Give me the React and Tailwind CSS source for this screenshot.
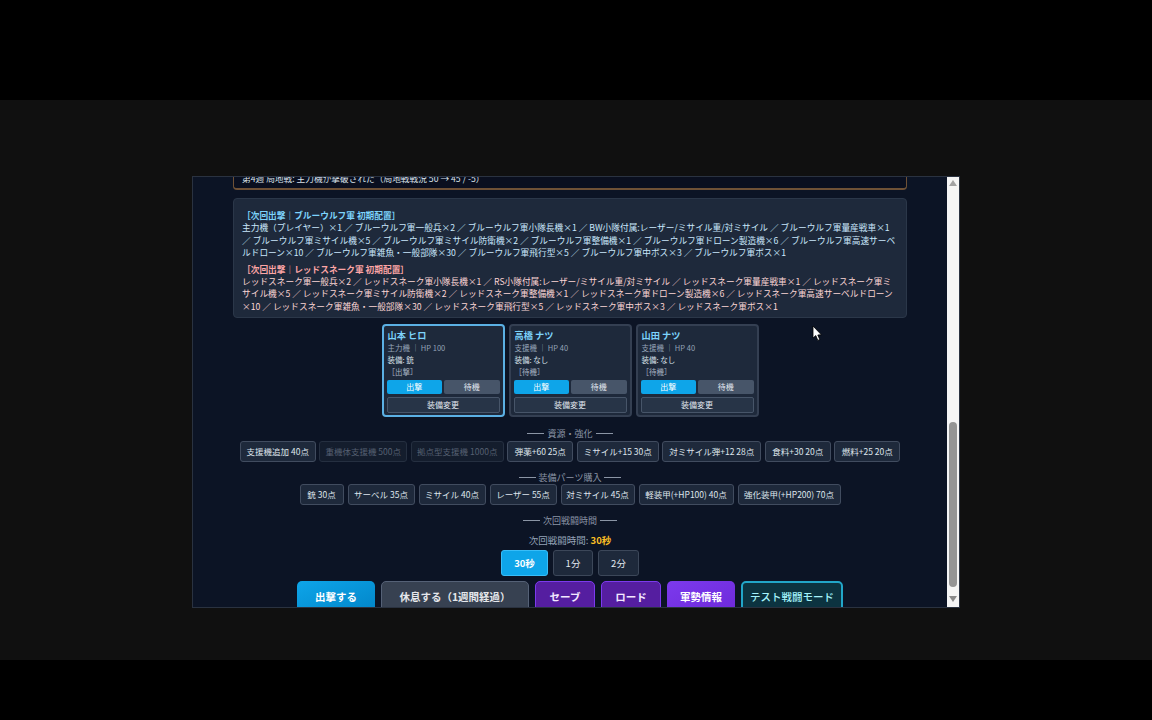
const font = { fontFamily: '"Noto Sans CJK JP", "Liberation Sans", sans-serif' };

const blueList =
  "主力機（プレイヤー）×1 ／ ブルーウルフ軍一般兵×2 ／ ブルーウルフ軍小隊長機×1 ／ BW小隊付属:レーザー/ミサイル重/対ミサイル ／ ブルーウルフ軍量産戦車×1 ／ ブルーウルフ軍ミサイル機×5 ／ ブルーウルフ軍ミサイル防衛機×2 ／ ブルーウルフ軍整備機×1 ／ ブルーウルフ軍ドローン製造機×6 ／ ブルーウルフ軍高速サーベルドローン×10 ／ ブルーウルフ軍雑魚・一般部隊×30 ／ ブルーウルフ軍飛行型×5 ／ ブルーウルフ軍中ボス×3 ／ ブルーウルフ軍ボス×1";
const redList =
  "レッドスネーク軍一般兵×2 ／ レッドスネーク軍小隊長機×1 ／ RS小隊付属:レーザー/ミサイル重/対ミサイル ／ レッドスネーク軍量産戦車×1 ／ レッドスネーク軍ミサイル機×5 ／ レッドスネーク軍ミサイル防衛機×2 ／ レッドスネーク軍整備機×1 ／ レッドスネーク軍ドローン製造機×6 ／ レッドスネーク軍高速サーベルドローン×10 ／ レッドスネーク軍雑魚・一般部隊×30 ／ レッドスネーク軍飛行型×5 ／ レッドスネーク軍中ボス×3 ／ レッドスネーク軍ボス×1";

const pilots = [
  { name: "山本 ヒロ", role: "主力機 ｜ HP 100", gear: "装備: 銃", state: "［出撃］", active: true },
  { name: "高橋 ナツ", role: "支援機 ｜ HP 40", gear: "装備: なし", state: "［待機］" },
  { name: "山田 ナツ", role: "支援機 ｜ HP 40", gear: "装備: なし", state: "［待機］" },
];

const resources = [
  { label: "支援機追加 40点", w: "w-[76px]" },
  { label: "重機体支援機 500点", w: "w-[88px]", off: true },
  { label: "拠点型支援機 1000点", w: "w-[93px]", off: true },
  { label: "弾薬+60 25点", w: "w-[66px]" },
  { label: "ミサイル+15 30点", w: "w-[82px]" },
  { label: "対ミサイル弾+12 28点", w: "w-[99px]" },
  { label: "食料+30 20点", w: "w-[66px]" },
  { label: "燃料+25 20点", w: "w-[66px]" },
];

const parts = [
  { label: "銃 30点", w: "w-[44px]" },
  { label: "サーベル 35点", w: "w-[67px]" },
  { label: "ミサイル 40点", w: "w-[67px]" },
  { label: "レーザー 55点", w: "w-[67px]" },
  { label: "対ミサイル 45点", w: "w-[74px]" },
  { label: "軽装甲(+HP100) 40点", w: "w-[95px]" },
  { label: "強化装甲(+HP200) 70点", w: "w-[103px]" },
];

const ShopButton = ({ label, w, off }) => (
  <button
    className={`h-[21px] shrink-0 rounded-[3px] border whitespace-nowrap text-center text-[8.5px] ${w} ${
      off
        ? "border-[#252f40] bg-[#141d2d] text-[#566072]"
        : "border-[#414c5f] bg-[#1e293b] text-[#dfe5ec]"
    }`}
  >
    {label}
  </button>
);

const SectionTitle = ({ children }) => (
  <div className="flex h-[12px] items-center justify-center gap-[3px] text-[9px] leading-none text-[#8b95a5]">
    <span className="h-px w-[17px] bg-[#8b95a5]"></span>
    <span>{children}</span>
    <span className="h-px w-[17px] bg-[#8b95a5]"></span>
  </div>
);

const PilotCard = ({ name, role, gear, state, active }) => (
  <div
    className={`flex h-[93px] w-[123px] flex-col rounded-[4px] border-2 bg-[#1e293b] px-[3px] pt-[2px] ${
      active ? "border-[#5bb0e4]" : "border-[#343f52]"
    }`}
  >
    <div className="h-[14px] pl-[1px] text-[9.2px] leading-[14px] font-bold text-[#7dd3fc]">{name}</div>
    <div className="h-[12px] pl-[1px] text-[7.5px] leading-[12px] text-[#94a3b8]">{role}</div>
    <div className="h-[12px] pl-[1px] text-[7.5px] leading-[12px] text-[#dbe2ea]">{gear}</div>
    <div className="h-[12px] pl-[1px] text-[7.5px] leading-[12px] text-[#a8b3c2]">{state}</div>
    <div className="mt-[2px] flex gap-[2px]">
      <button className="h-[14px] flex-1 rounded-[2px] bg-[#0ea5e9] text-[8px] leading-none text-white">出撃</button>
      <button className="h-[14px] flex-1 rounded-[2px] bg-[#475569] text-[8px] leading-none text-[#e2e8f0]">待機</button>
    </div>
    <button className="mt-[3px] h-[16px] rounded-[2px] border border-[#475569] bg-[#273447] text-[8px] leading-none text-[#e2e8f0]">
      装備変更
    </button>
  </div>
);

const Cursor = () => (
  <svg className="absolute top-[325px] left-[812px]" width="11" height="17" viewBox="0 0 11 17">
    <path d="M1 1 L1 13 L3.8 10.6 L5.8 15.4 L7.8 14.5 L5.8 10 L9.4 9.8 Z" fill="#fff" stroke="#000" strokeWidth="0.8" />
  </svg>
);

export default function App() {
  return (
    <div className="relative h-[720px] w-[1152px] overflow-hidden bg-black" style={font}>
      <div className="mt-[100px] h-[560px] bg-[#101010] pt-[76px] pl-[192px]">
        <div className="flex h-[432px] w-[768px] border border-[#2a3240] bg-[#0c1425]">
          <div className="flex-1 overflow-hidden">
            {/* log box, scrolled mostly out of view */}
            <div className="mx-[40px] flex h-[13px] items-end overflow-hidden rounded-b-[4px] border-x border-b-2 border-[#6f5136] bg-[#0a0f1f] px-[8px] pb-[3px]">
              <p className="text-[8.7px] leading-[12px] whitespace-nowrap text-[#dbe2ea]">
                第4週 局地戦: 主力機が撃破された（局地戦戦況 50 → 45 / -5）
              </p>
            </div>

            <div className="mx-[40px] mt-[8px] h-[120px] rounded-[4px] border border-[#2b3749] bg-[#1e293b] px-[8px] pt-[10px]">
              <p className="text-[8.7px] leading-[13px] font-bold text-[#7dd3fc]">［次回出撃｜ブルーウルフ軍 初期配置］</p>
              <p className="text-[8.7px] leading-[12.6px] text-[#c9e7fb]">{blueList}</p>
              <p className="mt-[3px] text-[8.7px] leading-[13px] font-bold text-[#fca5a5]">［次回出撃｜レッドスネーク軍 初期配置］</p>
              <p className="text-[8.7px] leading-[12.6px] text-[#fbd5d5]">{redList}</p>
            </div>

            <div className="mt-[6px] flex justify-center gap-[4px]">
              {pilots.map((p) => (
                <PilotCard key={p.name} {...p} />
              ))}
            </div>

            <div className="mt-[10px]">
              <SectionTitle>資源・強化</SectionTitle>
            </div>
            <div className="mt-[2px] flex justify-center gap-[3.5px]">
              {resources.map((b) => (
                <ShopButton key={b.label} {...b} />
              ))}
            </div>

            <div className="mt-[9px]">
              <SectionTitle>装備パーツ購入</SectionTitle>
            </div>
            <div className="mt-[1px] flex justify-center gap-[4px]">
              {parts.map((b) => (
                <ShopButton key={b.label} {...b} />
              ))}
            </div>

            <div className="mt-[9px]">
              <SectionTitle>次回戦闘時間</SectionTitle>
            </div>
            <p className="mt-[7px] h-[14px] text-center text-[9.5px] leading-[14px] text-[#94a3b8]">
              次回戦闘時間: <span className="font-bold text-[#fbbf24]">30秒</span>
            </p>
            <div className="mt-[3px] flex justify-center gap-[5px]">
              <button className="h-[26px] w-[47px] rounded-[3px] border border-[#38bdf8] bg-[#0ea5e9] text-[9.5px] font-bold text-white">30秒</button>
              <button className="h-[26px] w-[40px] rounded-[3px] border border-[#3c4759] bg-[#1e293b] text-[9.5px] text-[#e2e8f0]">1分</button>
              <button className="h-[26px] w-[41px] rounded-[3px] border border-[#3c4759] bg-[#1e293b] text-[9.5px] text-[#e2e8f0]">2分</button>
            </div>

            <div className="mt-[5px] flex justify-center gap-[6px]">
              <button className="h-[34px] w-[78px] rounded-[5px] bg-gradient-to-br from-[#0ea5e9] to-[#0284c7] pb-[2px] text-[10.5px] font-bold text-white">出撃する</button>
              <button className="h-[34px] w-[148px] rounded-[5px] border border-[#556176] bg-[#374151] pb-[2px] text-[10.5px] font-bold text-[#e5e7eb]">休息する（1週間経過）</button>
              <button className="h-[34px] w-[60px] rounded-[5px] border border-[#7c3aed] bg-[#551ea0] pb-[2px] text-[10.5px] font-bold text-[#f3e8ff]">セーブ</button>
              <button className="h-[34px] w-[60px] rounded-[5px] border border-[#7c3aed] bg-[#551ea0] pb-[2px] text-[10.5px] font-bold text-[#f3e8ff]">ロード</button>
              <button className="h-[34px] w-[68px] rounded-[5px] bg-gradient-to-br from-[#7c3aed] to-[#6d28d9] pb-[2px] text-[10.5px] font-bold text-white">軍勢情報</button>
              <button className="h-[34px] w-[102px] rounded-[5px] border-2 border-[#22a6c8] bg-[#0c3340] pb-[2px] text-[10.5px] font-medium text-[#a5f3fc]">テスト戦闘モード</button>
            </div>
          </div>

          {/* scrollbar */}
          <div className="relative flex w-[12px] shrink-0 flex-col items-center bg-[#f5f5f5]">
            <svg className="mt-[3px] shrink-0" width="8" height="6" viewBox="0 0 8 6">
              <path d="M4 0 L8 6 L0 6 Z" fill="#a3a3a3" />
            </svg>
            <div className="mt-[236px] h-[165px] w-[8px] rounded-full bg-[#959595]"></div>
            <svg className="mt-[9px] shrink-0" width="8" height="6" viewBox="0 0 8 6">
              <path d="M0 0 L8 0 L4 6 Z" fill="#8a8a8a" />
            </svg>
          </div>
        </div>
      </div>
      <Cursor />
    </div>
  );
}
